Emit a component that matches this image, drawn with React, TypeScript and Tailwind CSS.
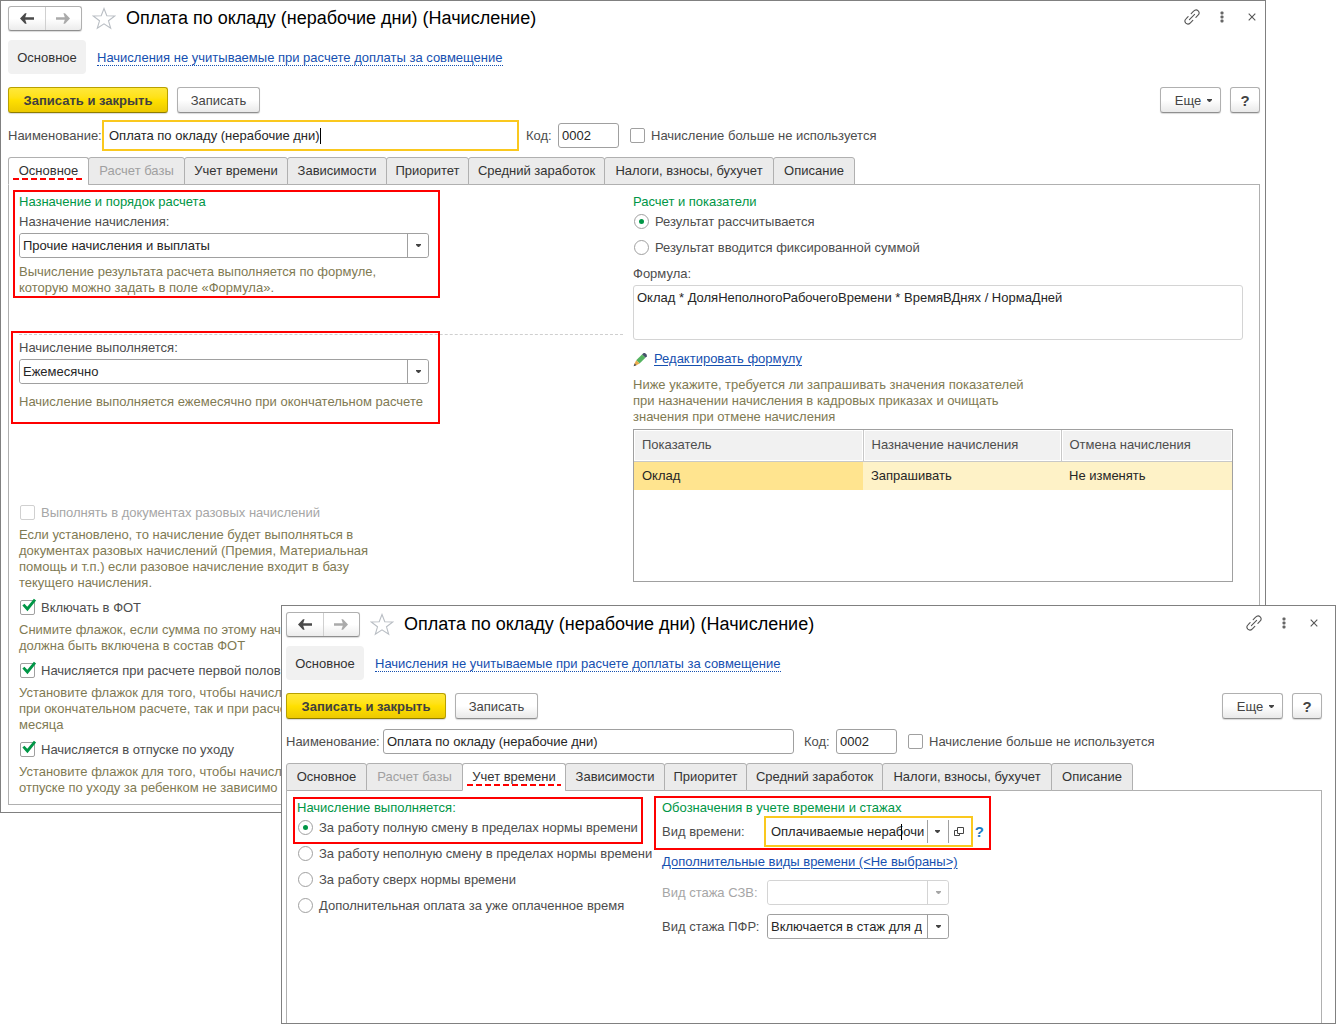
import React, { useId } from "react";

const TABS = [
  { label: "Основное", width: "w-[81px]" },
  { label: "Расчет базы", width: "w-[97px]" },
  { label: "Учет времени", width: "w-[104px]" },
  { label: "Зависимости", width: "w-[100px]" },
  { label: "Приоритет", width: "w-[83px]" },
  { label: "Средний заработок", width: "w-[137px]" },
  { label: "Налоги, взносы, бухучет", width: "w-[170px]" },
  { label: "Описание", width: "w-[82px]" },
];

const plainButton =
  "flex h-[26px] items-center justify-center rounded-[3px] border border-[#b0b0b0] border-b-[#8f8f8f] bg-linear-to-b from-white from-50% to-[#e9e9e9] pt-px text-[#444] shadow-[0_1px_1px_rgba(0,0,0,0.15)]";

function ArrowIcon({ color, flip }: { color: string; flip?: boolean }) {
  return (
    <svg width="14" height="11" viewBox="0 0 14 11" className={flip ? "rotate-180" : ""} aria-hidden="true">
      <path d="M0 5.5 5 0.3H6.6L5.2 4.3H14V6.7H5.2L6.6 10.7H5Z" fill={color} />
    </svg>
  );
}

function StarIcon() {
  return (
    <svg width="24" height="23" viewBox="0 0 24 23" fill="none" stroke="#b9bec4" strokeWidth="1.1" aria-hidden="true">
      <path d="M12 1.5 14.8 8.8 22.8 9 16.5 13.8 18.7 21.3 12 16.9 5.3 21.3 7.5 13.8 1.2 9 9.2 8.8Z" />
    </svg>
  );
}

function LinkIcon() {
  return (
    <svg width="16" height="16" viewBox="0 0 16 16" fill="none" stroke="#555" strokeWidth="1.1" strokeLinecap="round" aria-hidden="true">
      <path d="M5.4 10.6 10.6 5.4" />
      <path d="M7.2 4.6 9.6 2.2C11 .7 12.9.6 14.2 1.8 15.4 3.1 15.3 5 13.8 6.4L11.9 8.3" />
      <path d="M4.1 7.7 2.2 9.6C.7 11 .6 12.9 1.8 14.2 3.1 15.4 5 15.3 6.4 13.8L8.8 11.4" />
    </svg>
  );
}

function DotsIcon() {
  return (
    <svg width="4" height="12" viewBox="0 0 4 12" fill="#666" aria-hidden="true">
      <rect x="0.5" y="0.5" width="3" height="3" rx="1" />
      <rect x="0.5" y="4.5" width="3" height="3" rx="1" />
      <rect x="0.5" y="8.5" width="3" height="3" rx="1" />
    </svg>
  );
}

function CloseIcon() {
  return (
    <svg width="8" height="8" viewBox="0 0 8 8" stroke="#555" strokeWidth="1.1" aria-hidden="true">
      <path d="M0.7 0.7 7.3 7.3M7.3 0.7 0.7 7.3" />
    </svg>
  );
}

function Caret({ color = "#444" }: { color?: string }) {
  return (
    <svg width="5" height="3" viewBox="0 0 5 3" fill={color} aria-hidden="true">
      <path d="M0 0H5V1L3 3H2L0 1Z" />
    </svg>
  );
}

function OpenIcon() {
  return (
    <svg width="10" height="10" viewBox="0 0 10 10" fill="none" stroke="#444" aria-hidden="true">
      <path d="M3.5 0.5H9.5V6.5H3.5Z" />
      <path d="M3.5 3.5H0.5V8.5H5.5V6.5" />
    </svg>
  );
}

function PencilIcon() {
  return (
    <svg width="15" height="15" viewBox="0 0 15 15" aria-hidden="true">
      <path d="M9 2.4 10.6 1H12L13.8 2.8V4.2L12.4 5.8Z" fill="#46506a" />
      <path d="M9 2.4 12.4 5.8 6.6 11.6 3.2 8.2Z" fill="#55b360" />
      <path d="M3.2 8.2 6.6 11.6 2.8 13.4 1.4 12Z" fill="#e8a84a" />
      <path d="M1.6 11.4 3.4 13.2 0.6 14.2Z" fill="#444" />
    </svg>
  );
}

function CheckMark() {
  return (
    <svg width="16" height="15" viewBox="0 0 16 15" fill="none" stroke="#009646" strokeWidth="2.8" className="pointer-events-none absolute -top-0.5 left-0.5" aria-hidden="true">
      <path d="M1.4 6.6 5.4 11 13 1.6" />
    </svg>
  );
}

function Highlight({ className }: { className: string }) {
  return <div className={`pointer-events-none absolute border-2 border-[#fe0000] ${className}`} />;
}

function Checkbox({ label, checked = false, disabled = false }: { label: string; checked?: boolean; disabled?: boolean }) {
  return (
    <label className={`flex items-start gap-1.5 whitespace-nowrap ${disabled ? "text-[#a6a6a6]" : "text-[#4d4d4d]"}`}>
      <span className="relative flex">
        <input
          type="checkbox"
          defaultChecked={checked}
          disabled={disabled}
          className="size-[15px] appearance-none rounded-[2px] border border-[#a0a0a0] bg-white disabled:border-[#d0d0d0]"
        />
        {checked && <CheckMark />}
      </span>
      {label}
    </label>
  );
}

function Radio({ label, name, checked = false }: { label: string; name: string; checked?: boolean }) {
  return (
    <label className="flex h-4 items-start gap-1.5 pl-px whitespace-nowrap text-[#4d4d4d]">
      <span className="relative flex items-center justify-center">
        <input type="radio" name={name} defaultChecked={checked} className="peer size-[15px] appearance-none rounded-full border border-[#a0a0a0] bg-white" />
        <span className="pointer-events-none absolute hidden size-[5px] rounded-full bg-[#009646] peer-checked:block" />
      </span>
      {label}
    </label>
  );
}

function Select({ id, value, disabled = false }: { id: string; value: string; disabled?: boolean }) {
  return (
    <div className={`relative h-[25px] rounded-[3px] border bg-white ${disabled ? "border-[#d4d4d4]" : "border-[#a0a0a0]"}`}>
      <select id={id} disabled={disabled} defaultValue={value} className="block h-full w-full appearance-none overflow-hidden rounded-[3px] bg-white pr-[26px] pl-[3px] text-[#262626]">
        <option>{value}</option>
      </select>
      <span
        className={`pointer-events-none absolute inset-y-0 right-0 flex w-[21px] items-center justify-center border-l ${disabled ? "border-[#d4d4d4]" : "border-[#a0a0a0]"}`}
      >
        <Caret color={disabled ? "#a6a6a6" : "#444"} />
      </span>
    </div>
  );
}

function Hint({ lines }: { lines: string[] }) {
  return (
    <p className="whitespace-nowrap text-[#7f7a53]">
      {lines.map((line) => (
        <span key={line} className="block">
          {line}
        </span>
      ))}
    </p>
  );
}

function FormWindow({
  active,
  focusName = false,
  className,
  panelClassName,
  children,
}: {
  active: string;
  focusName?: boolean;
  className: string;
  panelClassName: string;
  children: React.ReactNode;
}) {
  const id = useId();
  return (
    <section className={`col-start-1 row-start-1 flex flex-col border border-[#808080] bg-white ${className}`}>
      <header className="flex h-[26px] items-center">
        <div className="flex h-[25px] w-[74px] rounded-[3px] border border-[#b0b0b0] border-b-[#8f8f8f] bg-linear-to-b from-white from-50% to-[#ececec] shadow-[0_1px_1px_rgba(0,0,0,0.15)]">
          <button aria-label="Назад" className="flex flex-1 items-center justify-center border-r border-[#d0d0d0]">
            <ArrowIcon color="#4a4a4a" />
          </button>
          <button aria-label="Вперед" className="flex flex-1 items-center justify-center">
            <ArrowIcon color="#aaaaaa" flip />
          </button>
        </div>
        <button aria-label="Избранное" className="ml-2.5">
          <StarIcon />
        </button>
        <h1 className="ml-2.5 text-[18px] whitespace-nowrap text-black">Оплата по окладу (нерабочие дни) (Начисление)</h1>
        <div className="ml-auto flex items-center pr-1 pb-0.5">
          <button aria-label="Ссылка">
            <LinkIcon />
          </button>
          <button aria-label="Меню" className="ml-5">
            <DotsIcon />
          </button>
          <button aria-label="Закрыть" className="ml-6">
            <CloseIcon />
          </button>
        </div>
      </header>

      <nav className="mt-[9px] flex items-center gap-[11px]">
        <span className="flex h-[34px] w-[78px] items-center justify-center rounded-[4px] bg-[#f1f1f1] pt-px text-[#333]">Основное</span>
        <a href="#" className="mt-0.5 border-b border-dotted border-[#1550b0] leading-[14px] whitespace-nowrap text-[#1550b0]">
          Начисления не учитываемые при расчете доплаты за совмещение
        </a>
      </nav>

      <div className="mt-[13px] flex items-center">
        <button className="flex h-[26px] w-40 items-center justify-center rounded-[3px] border border-[#b8a000] border-b-[#8f7d00] bg-linear-to-b from-[#ffe838] via-[#ffe000] to-[#ecc900] pt-px font-bold text-[#404040] shadow-[0_1px_1px_rgba(0,0,0,0.15)]">
          Записать и закрыть
        </button>
        <button className={`ml-[9px] w-[83px] ${plainButton}`}>Записать</button>
        <button className={`ml-auto w-[61px] gap-1.5 pl-1.5 ${plainButton}`}>
          Еще
          <Caret />
        </button>
        <button className={`ml-[9px] w-[30px] text-[15px] font-bold ${plainButton}`}>?</button>
      </div>

      <div className="mt-2.5 flex items-center text-[#4d4d4d]">
        <label htmlFor={`${id}-name`} className="w-[97px] whitespace-nowrap">
          Наименование:
        </label>
        <div
          className={`relative flex h-[25px] w-[411px] items-center ${focusName ? "outline-2 outline-offset-1 outline-[#fac81e]" : "rounded-[3px] border border-[#a0a0a0]"}`}
        >
          <input
            id={`${id}-name`}
            defaultValue="Оплата по окладу (нерабочие дни)"
            className={`h-full w-full bg-transparent text-[#262626] outline-none ${focusName ? "pl-1" : "pl-[3px]"}`}
          />
          {focusName && <span className="absolute left-[215px] h-4 w-px bg-black" />}
        </div>
        <label htmlFor={`${id}-code`} className="ml-2.5 w-8">
          Код:
        </label>
        <input id={`${id}-code`} defaultValue="0002" className="mr-[11px] h-[25px] w-[61px] rounded-[3px] border border-[#a0a0a0] pl-[3px] text-[#262626]" />
        <Checkbox label="Начисление больше не используется" />
      </div>

      <div role="tablist" className="relative z-10 mt-[9px] -mb-px flex h-7 text-[#333]">
        {TABS.map(({ label, width }) => (
          <button
            key={label}
            role="tab"
            aria-selected={label === active}
            disabled={label === "Расчет базы"}
            className={`relative -mr-px flex items-center justify-center rounded-t-[3px] border border-[#b0b0b0] whitespace-nowrap disabled:text-[#a0a0a0] ${width} ${label === active ? "border-b-white bg-white" : "bg-[#ebebeb]"}`}
          >
            {label}
            {label === active && (
              <span className="absolute inset-x-1 bottom-1 h-0.5 bg-[repeating-linear-gradient(90deg,#fe0000_0_6px,transparent_6px_9px)]" />
            )}
          </button>
        ))}
      </div>
      <div className={`border border-[#b0b0b0] ${panelClassName}`}>{children}</div>
    </section>
  );
}

function MainTab() {
  const id = useId();
  return (
    <div className="grid grid-cols-[604fr_610fr] gap-x-2.5 pt-[9px] pr-4 pb-2 pl-2.5">
      <div>
        <div className="relative w-[410px]">
          <Highlight className="-top-1 -right-[11px] -bottom-0.5 -left-1.5" />
          <h2 className="mb-1 text-[#009646]">Назначение и порядок расчета</h2>
          <label htmlFor={`${id}-purpose`} className="mb-[3px] block text-[#4d4d4d]">
            Назначение начисления:
          </label>
          <Select id={`${id}-purpose`} value="Прочие начисления и выплаты" />
          <div className="mt-1.5">
            <Hint lines={["Вычисление результата расчета выполняется по формуле,", "которую можно задать в поле «Формула»."]} />
          </div>
        </div>
        <hr className="mt-[38px] border-t border-dashed border-[#cfcfcf]" />
        <div className="relative w-[410px] pt-[5px]">
          <Highlight className="-top-1 -right-[11px] -bottom-[14px] -left-2" />
          <label htmlFor={`${id}-period`} className="mb-[3px] block text-[#4d4d4d]">
            Начисление выполняется:
          </label>
          <Select id={`${id}-period`} value="Ежемесячно" />
          <div className="mt-2.5">
            <Hint lines={["Начисление выполняется ежемесячно при окончательном расчете"]} />
          </div>
        </div>
        <div className="mt-[95px] flex flex-col gap-1.5">
          <div className="pl-px">
            <Checkbox label="Выполнять в документах разовых начислений" disabled />
          </div>
          <Hint
            lines={[
              "Если установлено, то начисление будет выполняться в",
              "документах разовых начислений (Премия, Материальная",
              "помощь и т.п.) если разовое начисление входит в базу",
              "текущего начисления.",
            ]}
          />
          <div className="mt-[3px] pl-px">
            <Checkbox label="Включать в ФОТ" checked />
          </div>
          <Hint lines={["Снимите флажок, если сумма по этому нач", "должна быть включена в состав ФОТ"]} />
          <div className="mt-[3px] pl-px">
            <Checkbox label="Начисляется при расчете первой полови" checked />
          </div>
          <Hint lines={["Установите флажок для того, чтобы начисле", "при окончательном расчете, так и при расче", "месяца"]} />
          <div className="mt-[3px] pl-px">
            <Checkbox label="Начисляется в отпуске по уходу" checked />
          </div>
          <Hint lines={["Установите флажок для того, чтобы начисле", "отпуске по уходу за ребенком не зависимо"]} />
        </div>
      </div>

      <div>
        <h2 className="mb-1 text-[#009646]">Расчет и показатели</h2>
        <div className="flex flex-col gap-2.5">
          <Radio name={`${id}-mode`} label="Результат рассчитывается" checked />
          <Radio name={`${id}-mode`} label="Результат вводится фиксированной суммой" />
          <label htmlFor={`${id}-formula`} className="text-[#4d4d4d]">
            Формула:
          </label>
        </div>
        <textarea
          id={`${id}-formula`}
          defaultValue="Оклад * ДоляНеполногоРабочегоВремени * ВремяВДнях / НормаДней"
          className="mt-[3px] block h-[55px] w-full resize-none rounded-[3px] border border-[#d4d4d4] px-[3px] py-1 text-[#262626]"
        />
        <a href="#" className="mt-[11px] flex items-center gap-1.5 text-[#1550b0]">
          <PencilIcon />
          <span className="underline underline-offset-2">Редактировать формулу</span>
        </a>
        <div className="mt-2.5">
          <Hint
            lines={[
              "Ниже укажите, требуется ли запрашивать значения показателей",
              "при назначении начисления в кадровых приказах и очищать",
              "значения при отмене начисления",
            ]}
          />
        </div>
        <div className="mt-1 mr-2.5 h-[153px] border border-[#a0a0a0]">
          <table className="w-full table-fixed border-collapse text-left">
            <colgroup>
              <col className="w-[229px]" />
              <col className="w-[198px]" />
              <col />
            </colgroup>
            <thead>
              <tr className="h-[31px] border-b border-[#c8c8c8] bg-[#f1f1f1] text-[#4d4d4d]">
                <th className="border-r border-[#c8c8c8] pl-2 font-normal shadow-[inset_0_0_0_1px_white]">Показатель</th>
                <th className="border-r border-[#c8c8c8] pl-2 font-normal shadow-[inset_0_0_0_1px_white]">Назначение начисления</th>
                <th className="pl-2 font-normal shadow-[inset_0_0_0_1px_white]">Отмена начисления</th>
              </tr>
            </thead>
            <tbody>
              <tr className="h-[29px] bg-[#fef2c7] text-[#262626]">
                <td className="bg-[#ffe48f] pl-2">Оклад</td>
                <td className="pl-2">Запрашивать</td>
                <td className="pl-2">Не изменять</td>
              </tr>
            </tbody>
          </table>
        </div>
      </div>
    </div>
  );
}

function TimeTab() {
  const id = useId();
  return (
    <div className="grid grid-cols-[355px_1fr] gap-x-2.5 pt-[9px] pl-2.5">
      <div className="flex flex-col gap-2.5">
        <div className="relative w-[341px]">
          <Highlight className="-top-[3px] -right-[5px] -bottom-2 -left-1" />
          <h2 className="mb-1 text-[#009646]">Начисление выполняется:</h2>
          <Radio name={`${id}-kind`} label="За работу полную смену в пределах нормы времени" checked />
        </div>
        <Radio name={`${id}-kind`} label="За работу неполную смену в пределах нормы времени" />
        <Radio name={`${id}-kind`} label="За работу сверх нормы времени" />
        <Radio name={`${id}-kind`} label="Дополнительная оплата за уже оплаченное время" />
      </div>

      <div>
        <div className="relative w-[322px]">
          <Highlight className="-top-1 -right-[7px] -bottom-1.5 -left-2" />
          <h2 className="mb-[3px] text-[#009646]">Обозначения в учете времени и стажах</h2>
          <div className="flex h-[25px] items-center">
            <label htmlFor={`${id}-time`} className="w-[105px] text-[#4d4d4d]">
              Вид времени:
            </label>
            <div className="relative flex h-[25px] w-[203px] items-center bg-white outline-2 outline-offset-1 outline-[#fac81e]">
              <input id={`${id}-time`} defaultValue="Оплачиваемые нерабочие дни" className="h-full w-[157px] bg-transparent pl-1 text-[#262626] outline-none" />
              <span className="absolute left-[134px] h-4 w-px bg-black" />
              <button aria-label="Выбрать" className="ml-[3px] flex h-[23px] w-[21px] items-center justify-center border-l border-[#a0a0a0]">
                <Caret />
              </button>
              <button aria-label="Открыть" className="flex h-[23px] flex-1 items-center justify-center border-l border-[#a0a0a0]">
                <OpenIcon />
              </button>
            </div>
            <button aria-label="Справка" className="ml-[5px] text-[15px] font-bold text-[#1a7cc4]">
              ?
            </button>
          </div>
        </div>
        <a href="#" className="mt-2.5 block w-fit whitespace-nowrap text-[#1550b0] underline underline-offset-2">
          Дополнительные виды времени (&lt;Не выбраны&gt;)
        </a>
        <div className="mt-2.5 grid grid-cols-[105px_182px] items-center gap-y-[9px]">
          <label htmlFor={`${id}-szv`} className="whitespace-nowrap text-[#a6a6a6]">
            Вид стажа СЗВ:
          </label>
          <Select id={`${id}-szv`} value="" disabled />
          <label htmlFor={`${id}-pfr`} className="whitespace-nowrap text-[#4d4d4d]">
            Вид стажа ПФР:
          </label>
          <Select id={`${id}-pfr`} value="Включается в стаж для досрочного назначения" />
        </div>
      </div>
    </div>
  );
}

export default function App() {
  return (
    <main className='grid min-w-[1280px] items-start overflow-hidden bg-white pb-px font-["Liberation_Sans",Arial,sans-serif] text-[13px] leading-4'>
      <FormWindow active="Основное" focusName className="mr-[72px] pt-1 pr-[5px] pb-[7px] pl-[7px]" panelClassName="">
        <MainTab />
      </FormWindow>
      <FormWindow active="Учет времени" className="z-20 mt-[605px] mr-0.5 ml-[281px] pt-[5px] pr-[13px] pl-1" panelClassName="min-h-[233px] border-b-0">
        <TimeTab />
      </FormWindow>
    </main>
  );
}
